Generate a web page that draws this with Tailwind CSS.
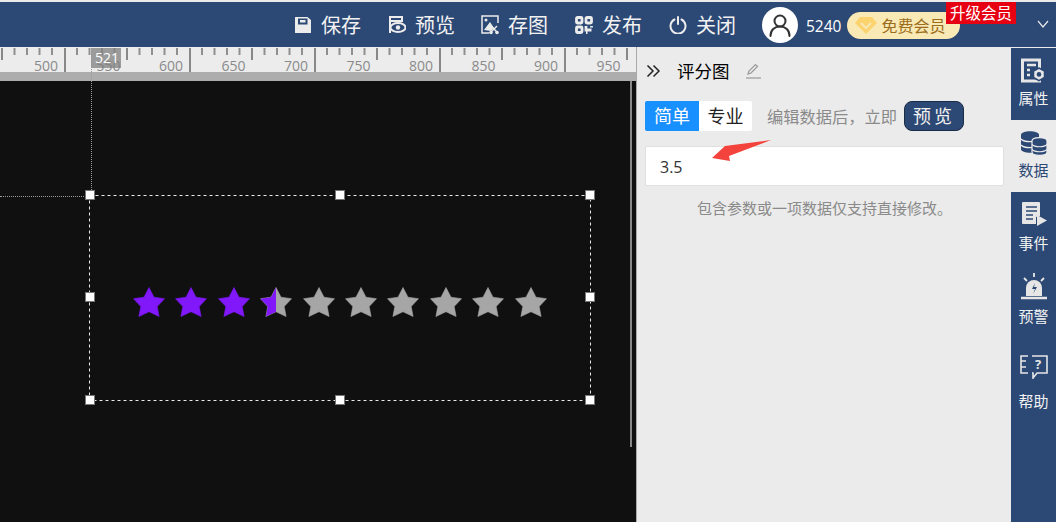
<!DOCTYPE html>
<html lang="zh-CN">
<head>
  <meta charset="UTF-8" />
  <title>评分图</title>
  <script src="https://cdn.jsdelivr.net/npm/@tailwindcss/browser@4"></script>
</head>
<body class="w-[1056px] h-[522px] overflow-hidden bg-[#ebebeb] font-['Open_Sans','Noto_Sans_CJK_SC',sans-serif]">

  <!-- top bar -->
  <header class="mt-[2px] h-[45px] bg-[#2c4875] relative flex items-center text-[#f2f2f2] text-[20px]">
    <div class="ml-[294px] flex">
      <div class="w-[94px] flex items-center gap-[9px]">
        <svg class="w-[18px] h-[18px]" viewBox="0 0 18 18" fill="#ececec"><path d="M1.500 1h12l3.500 3v12.500a.5.5 0 0 1-.5.5h-15a.5.5 0 0 1-.5-.5V1.500a.5.5 0 0 1 .5-.5zM4 2.500v6h9.500v-6zM6 4h5.500v2.500H6z" fill-rule="evenodd"/></svg>
        <span class="pt-[3px]">保存</span>
      </div>
      <div class="w-[93px] flex items-center gap-[9px]">
        <svg class="w-[18px] h-[18px]" viewBox="0 0 18 18"><path d="M2 1h12v4H2z" fill="none" stroke="#ececec" stroke-width="2"/><path d="M2 5v12" stroke="#ececec" stroke-width="2"/><ellipse cx="10" cy="11.500" rx="7.500" ry="4.500" fill="none" stroke="#ececec" stroke-width="2"/><circle cx="10" cy="11.500" r="2.200" fill="#ececec"/></svg>
        <span class="pt-[3px]">预览</span>
      </div>
      <div class="w-[94px] flex items-center gap-[9px]">
        <svg class="w-[18px] h-[20px]" viewBox="0 0 18 20"><path d="M17 8V1H1v17h7" fill="none" stroke="#ececec" stroke-width="1.500"/><circle cx="5" cy="5" r="1.500" fill="#ececec"/><path d="M3 15l6-8 4 6-3 3z" fill="#ececec"/><path d="M10 11l6 6" stroke="#ececec" stroke-width="1.500"/><path d="M16 11l-6 6" stroke="#ececec" stroke-width="1.500"/><circle cx="10" cy="17.500" r="1.800" fill="#ececec"/><circle cx="16" cy="17.500" r="1.800" fill="#ececec"/></svg>
        <span class="pt-[3px]">存图</span>
      </div>
      <div class="w-[94px] flex items-center gap-[9px]">
        <svg class="w-[18px] h-[18px]" viewBox="0 0 18 18" fill="none" stroke="#ececec" stroke-width="2.800"><rect x="1.500" y="1.500" width="5.500" height="5.500" rx="1"/><rect x="11" y="1.500" width="5.500" height="5.500" rx="1"/><rect x="1.500" y="11" width="5.500" height="5.500" rx="1"/><path d="M11 10v4h5.500M11 16.500h1.500M16.500 10v1.500"/></svg>
        <span class="pt-[3px]">发布</span>
      </div>
      <div class="flex items-center gap-[9px]">
        <svg class="w-[18px] h-[18px]" viewBox="0 0 18 18" fill="none" stroke="#ececec" stroke-width="2" stroke-linecap="round"><path d="M5.500 3.500a7.500 7.500 0 1 0 7 0"/><path d="M9 1v7"/></svg>
        <span class="pt-[3px]">关闭</span>
      </div>
    </div>
    <div class="ml-[26px] w-[36px] h-[36px] rounded-full bg-white flex items-center justify-center">
      <svg class="w-[24px] h-[24px]" viewBox="0 0 24 24" fill="none" stroke="#333" stroke-width="2"><circle cx="12" cy="8" r="5.500"/><path d="M2.500 23c0-6 4-9.500 9.500-9.500s9.500 3.500 9.500 9.500" stroke-linecap="round"/></svg>
    </div>
    <span class="ml-[8px] pt-[5px] text-[15.500px] text-white">5240</span>
    <div class="ml-[6px] w-[113px] h-[27px] mt-[1px] rounded-full bg-[#f9e9b5] flex items-center text-[16px] text-[#9c6d1c]">
      <svg class="ml-[8px] w-[22px] h-[18px]" viewBox="0 0 22 18"><path d="M5 1h12l5 6-11 11L0 7z" fill="#fbd36f"/><path d="M6 7l5 5 5-5" fill="none" stroke="#f7e7b4" stroke-width="2"/></svg>
      <span class="ml-[4px] pt-[2px]">免费会员</span>
    </div>
    <span class="absolute left-[946px] top-0 w-[70px] h-[22px] bg-[#e60012] text-white text-[15.500px] leading-[22px] text-center">升级会员</span>
    <svg class="absolute left-[1037px] top-[18px] w-[12px] h-[8px]" viewBox="0 0 12 8" fill="none" stroke="#e8e8e8" stroke-width="1.200"><path d="M1 1l5 6 5-6"/></svg>
  </header>

  <div class="flex h-[475px]">
    <!-- canvas column -->
    <div class="w-[637px] relative flex flex-col border-r border-[#a8a8a8]">
      <div class="h-[25px] bg-[#ececec] relative">
        <svg class="absolute left-0 top-0" width="636" height="25">
          <defs>
            <pattern id="ticks" x="64" y="0" width="125" height="25" patternUnits="userSpaceOnUse">
              <path d="M1 1v24" stroke="#888" stroke-width="2"/>
              <path d="M13 1v7M25.500 1v7M38 1v7M50.500 1v7M75.500 1v7M88 1v7M100.500 1v7M113 1v7" stroke="#8f8f8f" stroke-width="2"/>
              <path d="M63 1v12" stroke="#888" stroke-width="2"/>
            </pattern>
          </defs>
          <rect width="636" height="25" fill="url(#ticks)"/>
        </svg>
        <div class="absolute left-[14.750px] top-[12px] flex text-[14px] leading-[13px] text-[#8a8a8a]">
          <span class="w-[62.500px] text-center">500</span>
          <span class="w-[62.500px] text-center">550</span>
          <span class="w-[62.500px] text-center">600</span>
          <span class="w-[62.500px] text-center">650</span>
          <span class="w-[62.500px] text-center">700</span>
          <span class="w-[62.500px] text-center">750</span>
          <span class="w-[62.500px] text-center">800</span>
          <span class="w-[62.500px] text-center">850</span>
          <span class="w-[62.500px] text-center">900</span>
          <span class="w-[62.500px] text-center">950</span>
        </div>
        <span class="absolute left-[91px] top-[1px] w-[30px] h-[20px] bg-[#808080]/75 text-white text-[14px] leading-[20px] pl-[4px]">521</span>
      </div>
      <div class="h-[9px] bg-[#adadad]"></div>
      <div class="flex-1 bg-[#101010]"></div>

      <!-- guide lines -->
      <div class="absolute left-[91px] top-px h-[148px] border-l border-dotted border-[#9a9a9a]"></div>
      <div class="absolute left-0 top-[149px] w-[90px] border-t border-dotted border-[#9a9a9a]"></div>
      <!-- scrollbar -->
      <div class="absolute left-[630px] top-[34px] w-[2px] h-[366px] bg-[#888]"></div>

      <!-- selected widget -->
      <svg class="absolute left-[89px] top-[148px]" width="502" height="206" fill="none" stroke="#e8e8e8"><rect x=".5" y=".5" width="501" height="205" stroke-dasharray="3 3"/></svg>
      <div class="absolute left-[133px] top-[240px] flex gap-[10.400px]">
        <svg class="w-[32px] h-[30px]" viewBox="0 0 32 30"><path d="M16 .5l5 9.700 10.500 1.500-7.300 7.800 1.900 10-10.100-4.800-10.100 4.800 1.900-10L.5 11.700 11 10.200z" fill="#8018fa" stroke="#8018fa" stroke-width=".6" stroke-linejoin="round"/></svg>
        <svg class="w-[32px] h-[30px]" viewBox="0 0 32 30"><path d="M16 .5l5 9.700 10.500 1.500-7.300 7.800 1.900 10-10.100-4.800-10.100 4.800 1.900-10L.5 11.700 11 10.200z" fill="#8018fa" stroke="#8018fa" stroke-width=".6" stroke-linejoin="round"/></svg>
        <svg class="w-[32px] h-[30px]" viewBox="0 0 32 30"><path d="M16 .5l5 9.700 10.500 1.500-7.300 7.800 1.900 10-10.100-4.800-10.100 4.800 1.900-10L.5 11.700 11 10.200z" fill="#8018fa" stroke="#8018fa" stroke-width=".6" stroke-linejoin="round"/></svg>
        <svg class="w-[32px] h-[30px]" viewBox="0 0 32 30"><path d="M16 .5l5 9.700 10.500 1.500-7.300 7.800 1.900 10-10.100-4.800-10.100 4.800 1.900-10L.5 11.700 11 10.200z" fill="#a6a6a6" stroke="#a6a6a6" stroke-width=".6" stroke-linejoin="round"/><path d="M16 .5L11 10.200.5 11.700l7.300 7.800-1.900 10L16 24.700z" fill="#8018fa"/></svg>
        <svg class="w-[32px] h-[30px]" viewBox="0 0 32 30"><path d="M16 .5l5 9.700 10.500 1.500-7.300 7.800 1.900 10-10.100-4.800-10.100 4.800 1.900-10L.5 11.700 11 10.200z" fill="#a6a6a6" stroke="#a6a6a6" stroke-width=".6" stroke-linejoin="round"/></svg>
        <svg class="w-[32px] h-[30px]" viewBox="0 0 32 30"><path d="M16 .5l5 9.700 10.500 1.500-7.300 7.800 1.900 10-10.100-4.800-10.100 4.800 1.900-10L.5 11.700 11 10.200z" fill="#a6a6a6" stroke="#a6a6a6" stroke-width=".6" stroke-linejoin="round"/></svg>
        <svg class="w-[32px] h-[30px]" viewBox="0 0 32 30"><path d="M16 .5l5 9.700 10.500 1.500-7.300 7.800 1.900 10-10.100-4.800-10.100 4.800 1.900-10L.5 11.700 11 10.200z" fill="#a6a6a6" stroke="#a6a6a6" stroke-width=".6" stroke-linejoin="round"/></svg>
        <svg class="w-[32px] h-[30px]" viewBox="0 0 32 30"><path d="M16 .5l5 9.700 10.500 1.500-7.300 7.800 1.900 10-10.100-4.800-10.100 4.800 1.900-10L.5 11.700 11 10.200z" fill="#a6a6a6" stroke="#a6a6a6" stroke-width=".6" stroke-linejoin="round"/></svg>
        <svg class="w-[32px] h-[30px]" viewBox="0 0 32 30"><path d="M16 .5l5 9.700 10.500 1.500-7.300 7.800 1.900 10-10.100-4.800-10.100 4.800 1.900-10L.5 11.700 11 10.200z" fill="#a6a6a6" stroke="#a6a6a6" stroke-width=".6" stroke-linejoin="round"/></svg>
        <svg class="w-[32px] h-[30px]" viewBox="0 0 32 30"><path d="M16 .5l5 9.700 10.500 1.500-7.300 7.800 1.900 10-10.100-4.800-10.100 4.800 1.900-10L.5 11.700 11 10.200z" fill="#a6a6a6" stroke="#a6a6a6" stroke-width=".6" stroke-linejoin="round"/></svg>
      </div>
      <!-- resize handles -->
      <div class="absolute left-[85px] top-[143px] w-[10px] h-[10px] bg-white border border-[#777]"></div>
      <div class="absolute left-[335px] top-[143px] w-[10px] h-[10px] bg-white border border-[#777]"></div>
      <div class="absolute left-[585px] top-[143px] w-[10px] h-[10px] bg-white border border-[#777]"></div>
      <div class="absolute left-[85px] top-[245px] w-[10px] h-[10px] bg-white border border-[#777]"></div>
      <div class="absolute left-[585px] top-[245px] w-[10px] h-[10px] bg-white border border-[#777]"></div>
      <div class="absolute left-[85px] top-[348px] w-[10px] h-[10px] bg-white border border-[#777]"></div>
      <div class="absolute left-[335px] top-[348px] w-[10px] h-[10px] bg-white border border-[#777]"></div>
      <div class="absolute left-[585px] top-[348px] w-[10px] h-[10px] bg-white border border-[#777]"></div>
    </div>

    <!-- property panel -->
    <div class="w-[374px] pl-[8px] pr-[7px] relative">
      <div class="h-[54px] pb-[6px] flex items-center">
        <svg class="ml-[1px] w-[14px] h-[14px]" viewBox="0 0 14 14" fill="none" stroke="#222" stroke-width="1.500"><path d="M1.500 1.500L7 7l-5.500 5.500M7.500 1.500L13 7l-5.500 5.500"/></svg>
        <span class="ml-[17px] text-[17.500px] text-black">评分图</span>
        <svg class="ml-[15px] w-[17px] h-[16px]" viewBox="0 0 17 16" fill="none" stroke="#999" stroke-width="1.200"><path d="M3 11l1-3 6.500-6.500 2 2L6 10z"/><path d="M1 15h15"/></svg>
      </div>
      <div class="h-[30px] flex items-center">
        <div class="flex w-[107px] h-[30px] rounded-[2px] overflow-hidden text-[18px] leading-[30px] text-center">
          <span class="w-[54px] bg-[#1890ff] text-white">简单</span>
          <span class="w-[53px] bg-white text-[#222]">专业</span>
        </div>
        <span class="ml-[15px] pt-[2px] text-[16.250px] text-[#8a8a8a]">编辑数据后，立即</span>
        <button class="ml-[7px] w-[60px] h-[30px] rounded-lg bg-[#2c4875] border border-[#1c2c44] text-[#f0f0f0] text-[18px] leading-[28px] tracking-[3px]">预览</button>
      </div>
      <div class="mt-[15px] h-[40px] bg-white border border-[#e0e0e0] rounded-[2px] pl-[14px] text-[16px] leading-[40px] text-[#333]">3.5</div>
      <p class="mt-[11px] text-center text-[15px] text-[#8a8a8a]">包含参数或一项数据仅支持直接修改。</p>
      <!-- red annotation arrow -->
      <svg class="absolute left-[72px] top-[92px]" width="64" height="24" viewBox="0 0 64 24"><path d="M62 1L16 7 3 19l18 3-1-5z" fill="#f4423c"/></svg>
    </div>

    <!-- right sidebar -->
    <nav class="w-[45px] bg-[#2c4875] mt-px text-[15px] text-[#f2f2f2] flex flex-col items-center">
      <div class="w-[45px] h-[72px] flex flex-col items-center pt-[10px]">
        <svg class="w-[26px] h-[26px]" viewBox="0 0 26 26"><path d="M1.500 2h17v21h-17z" fill="none" stroke="#e6e6e6" stroke-width="3"/><path d="M6 7h9M6 12h3M6 17h3" stroke="#e6e6e6" stroke-width="2.500"/><path d="M18 10l5.500 3.200v6.300L18 22.700l-5.500-3.200v-6.300z" fill="#e6e6e6" stroke="#2c4875" stroke-width="1.500"/><circle cx="18" cy="16.400" r="2.300" fill="#2c4875"/></svg>
        <span class="mt-[3px] leading-[22px]">属性</span>
      </div>
      <div class="w-[45px] h-[72px] bg-[#ebebeb] text-[#2c4875] flex flex-col items-center pt-[10px]">
        <svg class="w-[28px] h-[26px]" viewBox="0 0 28 26"><path d="M1 5c0-5 18-5 18 0v14c0 5-18 5-18 0z" fill="#2c4875"/><path d="M1 9c3 3.500 15 3.500 18 0M1 15c3 3.500 15 3.500 18 0" fill="none" stroke="#ebebeb" stroke-width="1.200"/><path d="M12 11c0-4.500 15-4.500 15 0v11c0 4.500-15 4.500-15 0z" fill="#2c4875" stroke="#ebebeb" stroke-width="1.200"/><path d="M12 14.500c3 3 12 3 15 0M12 19.500c3 3 12 3 15 0" fill="none" stroke="#ebebeb" stroke-width="1.200"/></svg>
        <span class="mt-[3px] leading-[22px]">数据</span>
      </div>
      <div class="w-[45px] h-[73px] flex flex-col items-center pt-[9px]">
        <svg class="w-[26px] h-[26px]" viewBox="0 0 26 26"><path d="M2 1h16a1 1 0 0 1 1 1v13l-4 1v7H2a1 1 0 0 1-1-1V2a1 1 0 0 1 1-1z" fill="#e6e6e6"/><path d="M5 6h11M5 10h11M5 14h7M5 18h7" stroke="#2c4875" stroke-width="1.500"/><path d="M16 14v11l10-5.500z" fill="#e6e6e6"/></svg>
        <span class="mt-[5px] leading-[22px]">事件</span>
      </div>
      <div class="w-[45px] h-[73px] flex flex-col items-center pt-[8px]">
        <svg class="w-[26px] h-[27px]" viewBox="0 0 26 27"><path d="M13 0v4M3 5l3 3M23 5l-3 3" stroke="#e6e6e6" stroke-width="1.800"/><path d="M5 23v-8a8 8 0 0 1 16 0v8z" fill="#e6e6e6"/><path d="M0 25h26" stroke="#e6e6e6" stroke-width="2.500"/><path d="M14 10l-3 6h3l-2 5 4-7h-3z" fill="#2c4875"/></svg>
        <span class="mt-[5px] leading-[22px]">预警</span>
      </div>
      <div class="w-[45px] h-[84px] flex flex-col items-center pt-[17px]">
        <svg class="w-[28px] h-[24px]" viewBox="0 0 28 24" fill="none" stroke="#e6e6e6" stroke-width="1.600"><path d="M8 1H1v17h7M6 6H1M6 12H1"/><path d="M12 1h15v17H17l-4 5v-5h-1"/><text x="15" y="14" fill="#e6e6e6" stroke="none" font-size="13" font-weight="700" font-family="Open Sans">?</text></svg>
        <span class="mt-[11px] leading-[22px]">帮助</span>
      </div>
    </nav>
  </div>
</body>
</html>
